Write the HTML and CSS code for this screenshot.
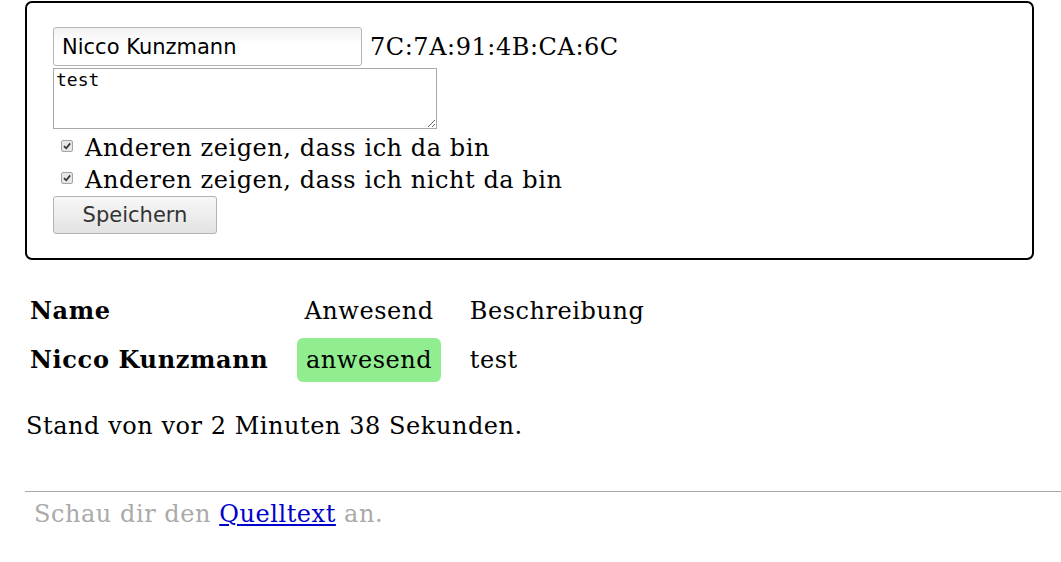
FILE: index.html
```html
<!DOCTYPE html>
<html lang="de">
<head>
<meta charset="utf-8">
<title>Anwesenheit</title>
<link rel="stylesheet" href="styles.css">
</head>
<body>
<form class="panel">
  <div class="row">
    <input class="name-input" type="text" value="Nicco Kunzmann">
    <span class="mac">7C:7A:91:4B:CA:6C</span>
  </div>
  <textarea class="desc">test</textarea>
  <label class="check first"><input type="checkbox" checked><span>Anderen zeigen, dass ich da bin</span></label>
  <label class="check"><input type="checkbox" checked><span>Anderen zeigen, dass ich nicht da bin</span></label>
  <button class="save" type="button">Speichern</button>
</form>

<table class="people">
  <tr>
    <td class="who">Name</td>
    <td class="state-head">Anwesend</td>
    <td class="about">Beschreibung</td>
  </tr>
  <tr>
    <td class="who">Nicco Kunzmann</td>
    <td class="state present">anwesend</td>
    <td class="about">test</td>
  </tr>
</table>

<p class="stamp">Stand von vor 2 Minuten 38 Sekunden.</p>

<hr class="rule">
<p class="foot">Schau dir den <a href="#">Quelltext</a> an.</p>
</body>
</html>
```
FILE: styles.css
```css
html, body {
  margin: 0;
  padding: 0;
  background: #fff;
}
body {
  padding-left: 25px;
  font-family: "DejaVu Serif", serif;
  font-size: 24px;
  letter-spacing: 0.55px;
  color: #000;
}
.panel {
  display: flex;
  flex-direction: column;
  align-items: flex-start;
  margin: 1px 27px 0 0;
  padding: 24px 26px 24px;
  border: 2px solid #000;
  border-radius: 7px;
}
.row {
  display: flex;
  align-items: center;
  gap: 8px;
}
.name-input {
  box-sizing: border-box;
  width: 309px;
  height: 39px;
  margin: 0;
  padding: 0 8px;
  font-family: "DejaVu Sans", sans-serif;
  font-size: 21px;
  letter-spacing: 0;
  color: #000;
  border: 1px solid #b5b5b5;
  border-radius: 3px;
  background: linear-gradient(#f2f2f2, #fff 45%);
}
.mac {
  line-height: 28px;
}
.desc {
  box-sizing: border-box;
  width: 384px;
  height: 61px;
  margin: 2px 0 0;
  padding: 0 2px;
  font-family: "DejaVu Sans Mono", monospace;
  font-size: 18px;
  letter-spacing: 0;
  border: 1px solid #a9a9a9;
  border-radius: 0;
  resize: both;
}
.check {
  display: flex;
  align-items: center;
  gap: 12px;
  margin: 0 0 0 8px;
  height: 32px;
  line-height: 28px;
}
.check.first {
  margin-top: 2px;
}
.check span {
  position: relative;
  top: 1px;
}
.check input {
  -webkit-appearance: none;
  appearance: none;
  box-sizing: border-box;
  width: 12px;
  height: 12px;
  margin: -2px 0 0;
  border: 1px solid #a4a4a4;
  border-radius: 2px;
  background-color: #e6e6e6;
  background-image: url("data:image/svg+xml;utf8,<svg xmlns='http://www.w3.org/2000/svg' viewBox='0 0 10 10'><path d='M2 5.2 L4.2 7.3 L8.2 2.4' fill='none' stroke='%23333' stroke-width='1.7'/></svg>");
  background-size: 10px 10px;
  background-position: center;
  background-repeat: no-repeat;
}
.save {
  box-sizing: border-box;
  width: 164px;
  height: 38px;
  margin: 1px 0 0;
  font-family: "DejaVu Sans", sans-serif;
  font-size: 21px;
  letter-spacing: 0;
  color: #333;
  border: 1px solid #b3b3b3;
  border-radius: 3px;
  background: linear-gradient(#f7f7f7, #e3e3e3);
}
.people {
  margin: 24px 0 0 -24px;
  border-collapse: separate;
  border-spacing: 24px 5px;
}
.people td {
  padding: 8px 5px;
  line-height: 28px;
  white-space: nowrap;
}
.people .who {
  font-weight: bold;
  letter-spacing: 0.65px;
}
.people .state-head,
.people .state {
  text-align: center;
  padding: 8px 7px;
}
.people .present {
  background: #90ee90;
  border-radius: 6px;
}
.stamp {
  margin: 25px 0 0 1px;
  line-height: 28px;
}
.rule {
  margin: 51px 0 0;
  border: 0;
  border-top: 1px solid #aaa;
  height: 0;
}
.foot {
  margin: 8px 0 0;
  padding-left: 9px;
  color: #aaa;
  line-height: 28px;
}
.foot a {
  color: #00c;
}
```
